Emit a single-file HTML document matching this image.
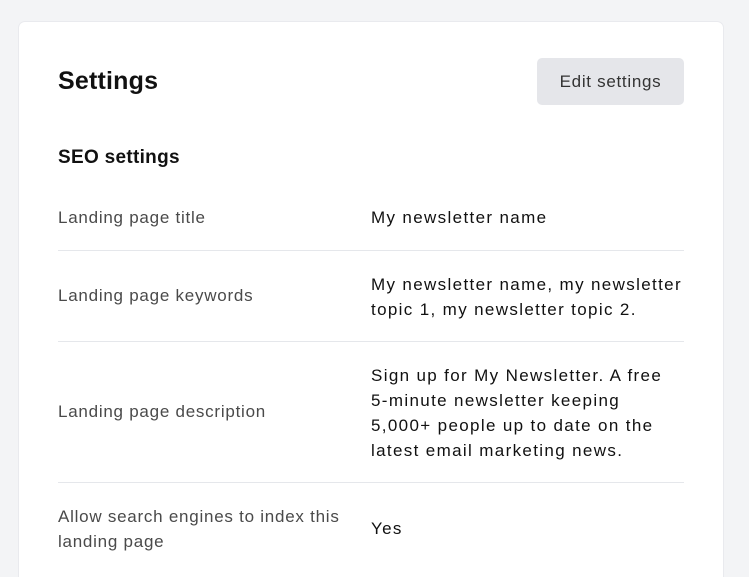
<!DOCTYPE html>
<html><head><style>
*{margin:0;padding:0;box-sizing:border-box}
html,body{width:749px;height:577px;overflow:hidden}
body{background:#f3f4f6;font-family:"Liberation Sans",sans-serif;position:relative}
.card{position:absolute;left:18px;top:21px;width:706px;height:556px;background:#fff;border:1px solid #e9eaee;border-bottom:none;border-radius:7px 7px 0 0}
.t{position:absolute;left:58px;top:67px;font-size:25px;font-weight:600;color:#111;letter-spacing:0.2px}
.btn{position:absolute;left:537px;top:58px;width:147px;height:47px;background:#e5e6ea;border-radius:5px;font-size:17px;color:#333;text-align:center;line-height:47px;letter-spacing:0.7px}
.h{position:absolute;left:58px;top:147px;font-size:19px;font-weight:600;color:#111;letter-spacing:0.3px}
.row{position:absolute;left:58px;width:626px;border-bottom:1px solid #e5e7eb}
.l{position:absolute;left:0;font-size:17px;color:#4a4a4a;line-height:25px;white-space:nowrap;letter-spacing:0.75px}
.v{position:absolute;left:313px;font-size:17px;color:#111;line-height:25px;white-space:nowrap;letter-spacing:1.35px}
</style></head><body>
<div class="card"></div>
<div class="t">Settings</div>
<div class="btn">Edit settings</div>
<div class="h">SEO settings</div>
<div class="row" style="top:185px;height:66px"><div class="l" style="top:20px">Landing page title</div><div class="v" style="top:20px">My newsletter name</div></div>
<div class="row" style="top:251px;height:91px"><div class="l" style="top:32px">Landing page keywords</div><div class="v" style="top:21px">My newsletter name, my newsletter<br>topic 1, my newsletter topic 2.</div></div>
<div class="row" style="top:342px;height:141px"><div class="l" style="top:57px">Landing page description</div><div class="v" style="top:21px">Sign up for My Newsletter. A free<br>5-minute newsletter keeping<br>5,000+ people up to date on the<br>latest email marketing news.</div></div>
<div class="row" style="top:483px;height:90px;border:none"><div class="l" style="top:21px">Allow search engines to index this<br>landing page</div><div class="v" style="top:33px">Yes</div></div>
</body></html>
